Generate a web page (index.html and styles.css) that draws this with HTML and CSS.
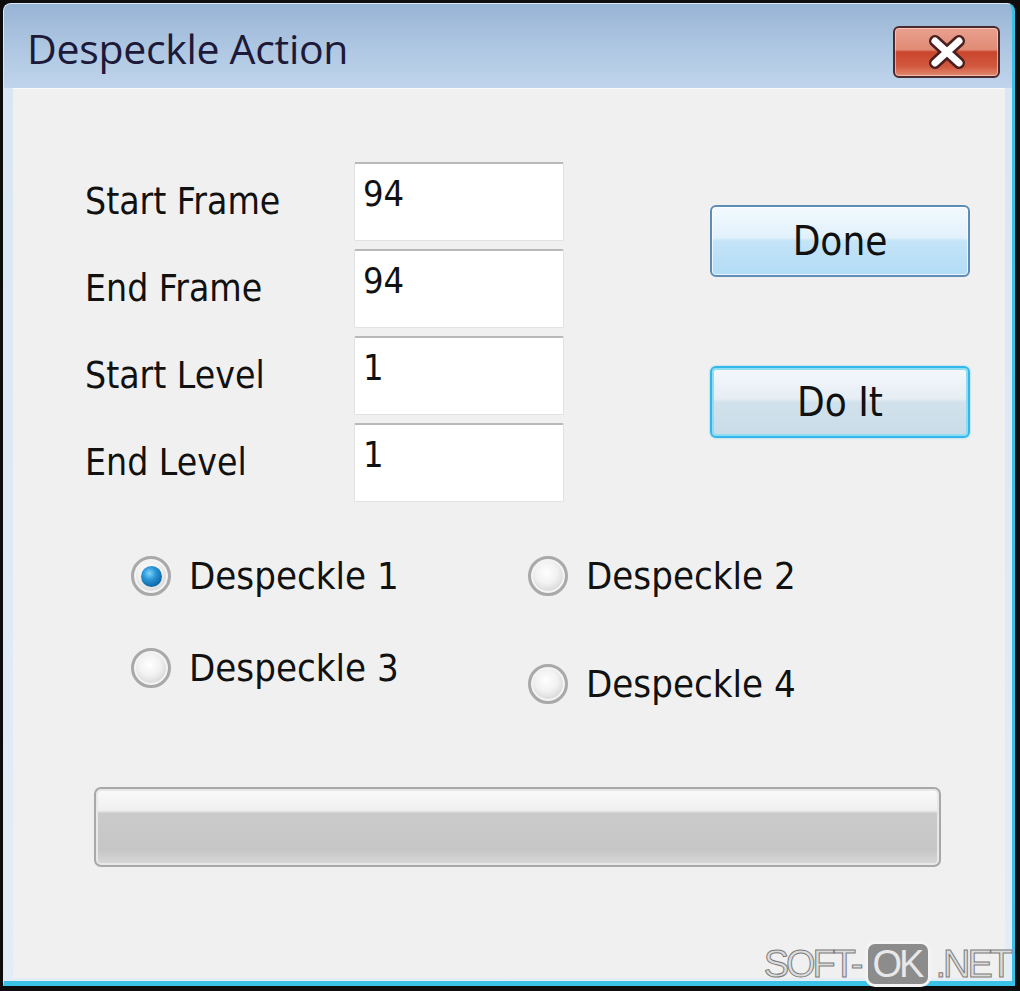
FILE: index.html
```html
<!DOCTYPE html>
<html lang="en">
<head>
    <meta charset="UTF-8">
    <title>Despeckle Action</title>
    <link rel="stylesheet" href="styles.css">
</head>
<body>
    <div class="window">
        <div class="titlebar">
            <span class="title">Despeckle Action</span>
            <button class="close-btn" title="Close">
                <svg width="44" height="34" viewBox="0 0 44 34">
                    <path d="M10 6 L34 28 M34 6 L10 28" stroke="#4a1f1f" stroke-width="12" stroke-linecap="round"/>
                    <path d="M10 6 L34 28 M34 6 L10 28" stroke="#ffffff" stroke-width="7" stroke-linecap="round"/>
                </svg>
            </button>
        </div>

        <div class="client">
            <div class="top-row">
                <div class="fields">
                    <label class="field-label">Start Frame</label>
                    <div class="field">94</div>
                    <label class="field-label">End Frame</label>
                    <div class="field">94</div>
                    <label class="field-label">Start Level</label>
                    <div class="field">1</div>
                    <label class="field-label">End Level</label>
                    <div class="field">1</div>
                </div>
                <div class="actions">
                    <button class="btn">Done</button>
                    <button class="btn btn-focus">Do It</button>
                </div>
            </div>

            <div class="radios">
                <div class="radio"><span class="radio-dot checked"></span>Despeckle 1</div>
                <div class="radio"><span class="radio-dot"></span>Despeckle 2</div>
                <div class="radio"><span class="radio-dot"></span>Despeckle 3</div>
                <div class="radio radio-low"><span class="radio-dot"></span>Despeckle 4</div>
            </div>

            <div class="progress"></div>
        </div>

        <div class="watermark">
            <span>SOFT-</span><span class="wm-box">OK</span><span>.NET</span>
        </div>
    </div>
</body>
</html>
```

FILE: styles.css
```css
* {
    margin: 0;
    padding: 0;
    box-sizing: border-box;
}

body {
    background: #0d0d0d;
    width: 1020px;
    height: 991px;
    overflow: hidden;
    padding: 3px 5px 5px 3px;
}

.window {
    position: relative;
    width: 1012px;
    height: 983px;
    display: flex;
    flex-direction: column;
    padding: 0 7px 3px 9px;
    border-top: 1px solid #dfe9f4;
    border-left: 1px solid #dfe9f4;
    border-right: 3px solid #38c1e4;
    border-bottom: 5px solid #3ac3e6;
    border-radius: 8px 8px 0 0;
    background: linear-gradient(to bottom, #98b4d5 0, #afc7e2 45px, #c0d5ec 84px, #d9e6f4 84px, #e3edf8 100%);
}

.titlebar {
    height: 84px;
    display: flex;
    align-items: flex-start;
    justify-content: space-between;
}

.title {
    font-family: "Open Sans", "Noto Sans", sans-serif;
    font-size: 41px;
    color: #1c1a38;
    margin: 16px 0 0 14px;
    letter-spacing: -0.3px;
}

.close-btn {
    width: 107px;
    height: 52px;
    margin: 22px 5px 0 0;
    border: 2px solid #4a2a2e;
    border-radius: 6px;
    background: linear-gradient(to bottom, #e9a08e 0, #e08b76 45%, #c9452c 50%, #d2593e 80%, #e08a70 100%);
    box-shadow: inset 0 0 0 1px rgba(255, 220, 210, 0.6);
    display: flex;
    align-items: center;
    justify-content: center;
}

.client {
    flex: 1;
    background: #f0f0f0;
    border-top: 1px solid #fbfbfb;
    padding-top: 73px;
    font-family: "DejaVu Sans Condensed", "Liberation Sans", sans-serif;
    color: #111;
}

.top-row {
    display: flex;
    align-items: flex-start;
}

.fields {
    display: grid;
    grid-template-columns: 269px 210px;
    grid-auto-rows: 79px;
    row-gap: 8px;
    padding-left: 72px;
}

.field-label {
    font-size: 37px;
    display: flex;
    align-items: center;
}

.field {
    background: #fff;
    border: 1px solid #e2e2e2;
    border-top: 2px solid #b9b9b9;
    border-radius: 2px;
    font-size: 36px;
    padding: 12px 0 0 8px;
    line-height: 1;
}

.actions {
    margin-left: 146px;
    padding-top: 43px;
    display: flex;
    flex-direction: column;
    gap: 89px;
}

.btn {
    width: 260px;
    height: 72px;
    font-family: inherit;
    font-size: 40px;
    color: #111;
    border: 2px solid #5f8cb4;
    border-radius: 6px;
    background: linear-gradient(to bottom, #f2f9fe 0, #e1f1fc 45%, #c4e4f8 50%, #b2dcf6 100%);
    box-shadow: inset 0 0 0 1px rgba(255, 255, 255, 0.7);
}

.btn-focus {
    border-color: #33b6e8;
    box-shadow: inset 0 0 0 2px #8fdcf6, 0 0 2px #6cc8ee;
    background: linear-gradient(to bottom, #f4f8fb 0, #e6eef4 45%, #d2e2ec 50%, #c8dce8 100%);
}

.radios {
    display: grid;
    grid-template-columns: 397px 397px;
    row-gap: 52px;
    margin-top: 54px;
    padding-left: 118px;
}

.radio {
    display: flex;
    align-items: center;
    gap: 18px;
    font-size: 38px;
    height: 40px;
}

.radio-low {
    margin-top: 16px;
}

.radio-dot {
    width: 40px;
    height: 40px;
    border-radius: 50%;
    border: 3px solid #a9a9a9;
    background: radial-gradient(circle at 45% 40%, #ffffff 0, #f1f1f1 40%, #d4d4d4 75%, #e8e8e8 100%);
    box-shadow: inset 0 0 0 2px #f4f4f4;
    flex-shrink: 0;
    display: flex;
    align-items: center;
    justify-content: center;
}

.radio-dot.checked::after {
    content: "";
    width: 21px;
    height: 21px;
    border-radius: 50%;
    background: radial-gradient(circle at 40% 35%, #7fd6ff 0, #2a95d6 35%, #0a5f9e 80%, #0a4d86 100%);
}

.progress {
    margin: 83px 0 0 81px;
    width: 847px;
    height: 80px;
    border: 2px solid #a8a8a8;
    border-radius: 7px;
    background: linear-gradient(to bottom, #fafafa 0, #f0f0f0 28%, #cacaca 32%, #c6c6c6 80%, #d9d9d9 100%);
    box-shadow: inset 0 0 0 2px #e8e8e8;
}

.watermark {
    position: absolute;
    right: 2px;
    bottom: -6px;
    display: flex;
    align-items: center;
    font-family: "Liberation Sans", sans-serif;
    font-size: 38px;
    letter-spacing: -3px;
    color: #dcdcdc;
    -webkit-text-stroke: 1px #7c7c7c;
}

.wm-box {
    background: #8c8c8c;
    color: #e8e8e8;
    -webkit-text-stroke: 0;
    border: 3px solid #f4f4f4;
    border-radius: 10px;
    padding: 0 7px 0 5px;
    margin: 0 4px;
    line-height: 40px;
}
```
